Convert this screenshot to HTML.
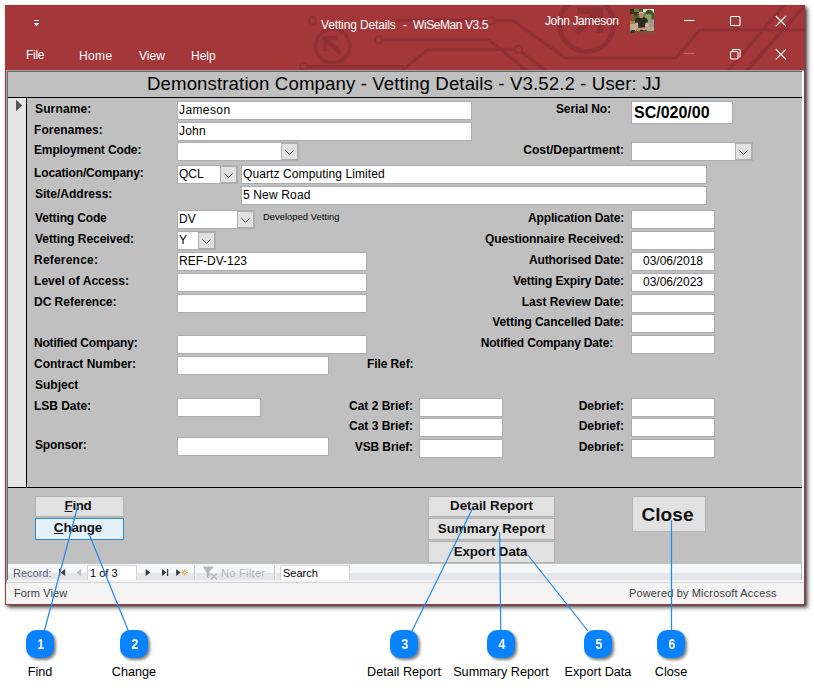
<!DOCTYPE html>
<html><head><meta charset="utf-8"><title>Vetting Details</title>
<style>
*{box-sizing:border-box;margin:0;padding:0}
html,body{width:814px;height:695px;overflow:hidden;background:#fff}
body{position:relative;font-family:"Liberation Sans",sans-serif;}
.abs{position:absolute}
#win{position:absolute;left:5px;top:5px;width:800px;height:600px;background:#a4373a;box-shadow:3px 3px 4px rgba(0,0,0,.55),1px 1px 2px rgba(0,0,0,.5)}
.seg{font-family:"Liberation Sans",sans-serif;color:#fff;white-space:nowrap}
.lbl{position:absolute;letter-spacing:0px;font-weight:bold;font-size:12px;line-height:14px;color:#000;white-space:nowrap;height:14px}
.lbl.r{text-align:right}
.fld{position:absolute;background:#fff;border:1px solid #abadb3;font-size:12px;line-height:16px;color:#000;padding:0 0 0 1px;white-space:nowrap;overflow:hidden}
.cb{position:absolute;background:#fff;border:1px solid #adadad;font-size:12px;line-height:16px;color:#000;padding:0 0 0 1px;white-space:nowrap;overflow:hidden}
.dd{position:absolute;right:0;top:0;bottom:0;width:17px;background:#e1e1e1;border:1px solid #adadad}
.dd svg{position:absolute;left:3px;top:50%;margin-top:-2px}
.btn{position:absolute;background:#e1e1e1;border:1px solid #b2b2b2;font-weight:bold;font-size:13.33px;text-align:center;color:#111;white-space:nowrap}
.co{position:absolute;width:28px;height:28px;border-radius:10px;background:#0a82fe;color:#fff;font-weight:bold;font-size:14px;line-height:28px;text-align:center;box-shadow:2px 2px 3px rgba(0,0,0,.5)}
.co span{display:inline-block;transform:scaleX(.88);position:relative;left:.6px}
.cl{position:absolute;font-size:12.67px;line-height:16px;color:#000;white-space:nowrap;text-align:center;width:120px}
.nav{font-size:11px;color:#444;white-space:nowrap}
</style></head><body>

<div id="win">
  <!-- title bar decoration (page coords shifted by -5,-5) -->
  <svg class="abs" style="left:0;top:0" width="800" height="65" viewBox="5 5 800 65" fill="none" stroke="#903035" stroke-width="3.2" stroke-linejoin="round">
    <circle cx="312.6" cy="20.4" r="3.6" stroke-width="2"/>
    <circle cx="332.7" cy="45.8" r="17" stroke-width="3.8"/>
    <path d="M340.5 53.5 L326 39 M325 51 V38 H338" stroke-width="4.6" stroke-linejoin="miter"/>
    <circle cx="378.5" cy="39.8" r="3.6" stroke-width="2"/>
    <path d="M382.5 39.9 H489 L527 71"/>
    <circle cx="303.7" cy="66.4" r="3.6" stroke-width="2"/>
    <path d="M307.5 66.6 H404"/>
    <path d="M402 70.5 L428.3 49.3 H514.5"/>
    <circle cx="518.6" cy="49.3" r="3.6" stroke-width="2"/>
    <path d="M521.5 51.5 L546 71"/>
    <circle cx="491" cy="20.4" r="3.6" stroke-width="2"/>
    <path d="M396 20.2 H487.3 M495 20.4 H513 L565 58 H676 L699.5 30 H806"/>
    <circle cx="586.5" cy="24.5" r="27" stroke-width="5"/>
    <path d="M576 33.5 L598 11.5 M577 10.5 H600 V33" stroke-width="6.5" stroke-linejoin="miter"/>
    <path d="M728 71 L785 4 M746.5 71 L806 4" stroke-width="3.6"/>
  </svg>
  <!-- window controls -->
  <svg class="abs" style="left:0;top:0" width="800" height="65" viewBox="5 5 800 65" fill="none" stroke="#fff" stroke-width="1.1">
    <path d="M34 20 H39 V21 H34 Z M33.8 23 H39.2 L36.5 26.2 Z" fill="#fff" stroke="none"/>
    <path d="M684 20.5 H694.5"/>
    <rect x="730.5" y="16.5" width="9.5" height="9" rx="1"/>
    <path d="M775.8 16 L786 26.2 M786 16 L775.8 26.2"/>
    <path d="M684 53.5 H694.5" stroke="#c8636b"/>
    <rect x="730.5" y="51.5" width="7.5" height="7.5" rx="1.2"/>
    <path d="M732.5 51 V50.3 Q732.5 49.5 733.5 49.5 H739 Q740.2 49.5 740.2 50.7 V56 Q740.2 57 739.3 57 H738.6"/>
    <path d="M775.8 49.2 L786 59.4 M786 49.2 L775.8 59.4"/>
  </svg>
  <div class="seg abs" style="left:316px;top:12px;font-size:12px;line-height:16px"><span id="t1" style="letter-spacing:-.14px">Vetting Details</span></div>
  <div class="seg abs" style="left:398px;top:12px;font-size:12px;line-height:16px"><span id="t2">-</span></div>
  <div class="seg abs" style="left:408px;top:12px;font-size:12px;line-height:16px"><span id="t3" style="letter-spacing:-.42px">WiSeMan V3.5</span></div>
  <div class="seg abs" style="left:540px;top:8px;font-size:12px;letter-spacing:-.38px;line-height:16px">John Jameson</div>
  <svg class="abs" style="left:625px;top:4px" width="24" height="24" viewBox="0 0 24 24"><defs><filter id="avb" x="-10%" y="-10%" width="120%" height="120%"><feGaussianBlur stdDeviation="0.55"/></filter><clipPath id="avc"><rect width="24" height="24"/></clipPath></defs><g clip-path="url(#avc)"><rect width="24" height="24" fill="#4b5a2d"/><g filter="url(#avb)"><rect x="-1" y="-1" width="10" height="7" fill="#2c3619"/><rect x="4" y="0" width="5" height="3" fill="#6f8040"/><rect x="13" y="-1" width="12" height="4.5" fill="#e4e9e6"/><path d="M16 2 Q19 -0.5 22.5 2 L23 7 H15 Z" fill="#3c4f22"/><rect x="14.5" y="5" width="7" height="6" fill="#8a9c55"/><rect x="-1" y="5" width="5.5" height="8" fill="#8c4d29"/><rect x="0" y="12" width="5" height="3" fill="#9a8a3a"/><rect x="18" y="10.5" width="7" height="8" fill="#9b9a90"/><rect x="-1" y="15" width="7" height="7" fill="#b8ac9b"/><rect x="17" y="18" width="8" height="4" fill="#b5a794"/><path d="M5 11 Q6 8.5 9 8.5 H14 Q17 8.5 17.5 11.5 L18 19 H5 Z" fill="#2a2e23"/><ellipse cx="11.2" cy="6" rx="2.6" ry="3.1" fill="#b98a6c"/><path d="M8.2 4.2 Q11 0.8 14.3 4 L14.6 4.8 Q11 3.2 7.8 5 Z" fill="#cdb3a6"/><path d="M8 5 L7.2 4.4 M14.4 4.6 L15.4 5.4" stroke="#a9522c" stroke-width="1.2"/><rect x="5" y="13.5" width="3.2" height="7" rx="1.4" fill="#d3a98e"/><rect x="15.2" y="13.5" width="3.6" height="6.5" rx="1.5" fill="#d7ae95"/><path d="M6 19.2 L18.5 18 L19 20.5 L7 22 Z" fill="#c8997c"/><rect x="-1" y="22" width="26" height="3" fill="#6b5943"/><rect x="1" y="21" width="4" height="3" fill="#3a372c"/><rect x="10" y="20.8" width="3" height="1.3" fill="#2b2622"/></g></g></svg>
  <div class="seg abs" style="left:21px;top:42px;font-size:12px;letter-spacing:-.3px;line-height:16px">File</div>
  <div class="seg abs" style="left:74px;top:43px;font-size:12px;letter-spacing:.35px;line-height:16px">Home</div>
  <div class="seg abs" style="left:134px;top:43px;font-size:12px;line-height:16px">View</div>
  <div class="seg abs" style="left:186px;top:43px;font-size:12px;line-height:16px">Help</div>
</div>

<!-- client area (page coords) -->
<div class="abs" style="left:6px;top:70px;width:798px;height:534px;background:#f3f3f3"></div>
<div class="abs" style="left:6px;top:70px;width:1px;height:512px;background:#a3a8a8"></div>
<div class="abs" style="left:802px;top:71px;width:2px;height:511px;background:#fff"></div>
<div class="abs" style="left:6px;top:70px;width:798px;height:1px;background:#a0a2a2"></div>
<div class="abs" style="left:7px;top:71px;width:795px;height:509px;background:#c0c0c0;border-left:1px solid #696969;border-top:1px solid #696969"></div>
<div class="abs" id="hdr" style="left:7px;top:72px;width:794px;height:24px;font-size:18.67px;letter-spacing:.1px;line-height:24px;text-align:center;color:#000;white-space:nowrap">Demonstration Company - Vetting Details - V3.52.2 - User: JJ</div>
<div class="abs" style="left:8px;top:97px;width:794px;height:1px;background:#000"></div>
<div class="abs" style="left:8px;top:98px;width:18px;height:389px;background:#e6e6e6"></div>
<div class="abs" style="left:26px;top:98px;width:1px;height:389px;background:#000"></div>
<div class="abs" style="left:8px;top:487px;width:794px;height:1px;background:#000"></div>
<svg class="abs" style="left:15px;top:99px" width="8" height="13" viewBox="0 0 8 13"><path d="M1 0.8 L7.3 6.5 L1 12.2 Z" fill="#555"/></svg>

<div class="lbl" style="left:35px;top:102px;letter-spacing:0.14px">Surname:</div>
<div class="lbl" style="left:34px;top:123px;letter-spacing:0.08px">Forenames:</div>
<div class="lbl" style="left:34px;top:143px;letter-spacing:-0.13px">Employment Code:</div>
<div class="lbl" style="left:34px;top:166px;letter-spacing:-0.14px">Location/Company:</div>
<div class="lbl" style="left:35px;top:187px">Site/Address:</div>
<div class="lbl" style="left:35px;top:211px;letter-spacing:-0.14px">Vetting Code</div>
<div class="lbl" style="left:35px;top:232px;letter-spacing:-0.06px">Vetting Received:</div>
<div class="lbl" style="left:34px;top:253px;letter-spacing:0.21px">Reference:</div>
<div class="lbl" style="left:34px;top:274px;letter-spacing:0.05px">Level of Access:</div>
<div class="lbl" style="left:34px;top:295px;letter-spacing:-0.02px">DC Reference:</div>
<div class="lbl" style="left:34px;top:336px;letter-spacing:-0.19px">Notified Company:</div>
<div class="lbl" style="left:34px;top:357px">Contract Number:</div>
<div class="lbl" style="left:35px;top:378px">Subject</div>
<div class="lbl" style="left:34px;top:399px;letter-spacing:-0.03px">LSB Date:</div>
<div class="lbl" style="left:35px;top:438px;letter-spacing:-0.14px">Sponsor:</div>
<div class="lbl" style="left:367px;top:357px;letter-spacing:-0.1px">File Ref:</div>
<div class="lbl r" style="left:351px;top:102px;width:260px;letter-spacing:-0.1px">Serial No:</div>
<div class="lbl r" style="left:364px;top:143px;width:260px">Cost/Department:</div>
<div class="lbl r" style="left:364px;top:211px;width:260px;letter-spacing:-0.16px">Application Date:</div>
<div class="lbl r" style="left:364px;top:232px;width:260px;letter-spacing:-0.07px">Questionnaire Received:</div>
<div class="lbl r" style="left:364px;top:253px;width:260px;letter-spacing:-0.1px">Authorised Date:</div>
<div class="lbl r" style="left:364px;top:274px;width:260px;letter-spacing:-0.12px">Vetting Expiry Date:</div>
<div class="lbl r" style="left:364px;top:295px;width:260px;letter-spacing:-0.03px">Last Review Date:</div>
<div class="lbl r" style="left:364px;top:315px;width:260px;letter-spacing:-0.07px">Vetting Cancelled Date:</div>
<div class="lbl r" style="left:353px;top:336px;width:260px;letter-spacing:-0.17px">Notified Company Date:</div>
<div class="lbl r" style="left:364px;top:399px;width:260px">Debrief:</div>
<div class="lbl r" style="left:364px;top:419px;width:260px">Debrief:</div>
<div class="lbl r" style="left:364px;top:440px;width:260px">Debrief:</div>
<div class="lbl r" style="left:153px;top:399px;width:260px">Cat 2 Brief:</div>
<div class="lbl r" style="left:153px;top:419px;width:260px">Cat 3 Brief:</div>
<div class="lbl r" style="left:153px;top:440px;width:260px;letter-spacing:-0.12px">VSB Brief:</div>
<div class="fld" style="left:177px;top:101px;width:295px;height:19px;letter-spacing:.4px">Jameson</div>
<div class="fld" style="left:177px;top:122px;width:295px;height:19px;letter-spacing:.2px">John</div>
<div class="cb" style="left:177px;top:142px;width:122px;height:19px"><div class="dd"><svg width="9" height="6" viewBox="0 0 9 6"><path d="M0.5 0.5 L4.5 4.5 L8.5 0.5" fill="none" stroke="#444" stroke-width="1"/></svg></div></div>
<div class="cb" style="left:177px;top:165px;width:61px;height:19px">QCL<div class="dd"><svg width="9" height="6" viewBox="0 0 9 6"><path d="M0.5 0.5 L4.5 4.5 L8.5 0.5" fill="none" stroke="#444" stroke-width="1"/></svg></div></div>
<div class="fld" style="left:241px;top:165px;width:466px;height:19px;letter-spacing:.1px">Quartz Computing Limited</div>
<div class="fld" style="left:241px;top:186px;width:466px;height:19px;letter-spacing:.15px">5 New Road</div>
<div class="cb" style="left:177px;top:210px;width:78px;height:19px">DV<div class="dd"><svg width="9" height="6" viewBox="0 0 9 6"><path d="M0.5 0.5 L4.5 4.5 L8.5 0.5" fill="none" stroke="#444" stroke-width="1"/></svg></div></div>
<div class="abs" style="left:263px;top:212px;font-size:9.33px;letter-spacing:.05px;line-height:11px;color:#000;white-space:nowrap">Developed Vetting</div>
<div class="cb" style="left:177px;top:231px;width:39px;height:19px">Y<div class="dd"><svg width="9" height="6" viewBox="0 0 9 6"><path d="M0.5 0.5 L4.5 4.5 L8.5 0.5" fill="none" stroke="#444" stroke-width="1"/></svg></div></div>
<div class="fld" style="left:177px;top:252px;width:190px;height:19px;">REF-DV-123</div>
<div class="fld" style="left:177px;top:273px;width:190px;height:19px;"></div>
<div class="fld" style="left:177px;top:294px;width:190px;height:19px;"></div>
<div class="fld" style="left:177px;top:335px;width:190px;height:19px;"></div>
<div class="fld" style="left:177px;top:356px;width:152px;height:19px;"></div>
<div class="fld" style="left:177px;top:398px;width:84px;height:19px;"></div>
<div class="fld" style="left:177px;top:437px;width:152px;height:19px;"></div>
<div class="fld" style="left:631px;top:101px;width:102px;height:23px;font-weight:bold;font-size:16px;line-height:21px;padding-left:2px">SC/020/00</div>
<div class="cb" style="left:631px;top:142px;width:122px;height:19px"><div class="dd"><svg width="9" height="6" viewBox="0 0 9 6"><path d="M0.5 0.5 L4.5 4.5 L8.5 0.5" fill="none" stroke="#444" stroke-width="1"/></svg></div></div>
<div class="fld" style="left:631px;top:210px;width:84px;height:19px;"></div>
<div class="fld" style="left:631px;top:231px;width:84px;height:19px;"></div>
<div class="fld" style="left:631px;top:252px;width:84px;height:19px;text-align:center;padding:0">03/06/2018</div>
<div class="fld" style="left:631px;top:273px;width:84px;height:19px;text-align:center;padding:0">03/06/2023</div>
<div class="fld" style="left:631px;top:294px;width:84px;height:19px;"></div>
<div class="fld" style="left:631px;top:314px;width:84px;height:19px;"></div>
<div class="fld" style="left:631px;top:335px;width:84px;height:19px;"></div>
<div class="fld" style="left:631px;top:398px;width:84px;height:19px;"></div>
<div class="fld" style="left:419px;top:398px;width:84px;height:19px;"></div>
<div class="fld" style="left:631px;top:418px;width:84px;height:19px;"></div>
<div class="fld" style="left:419px;top:418px;width:84px;height:19px;"></div>
<div class="fld" style="left:631px;top:439px;width:84px;height:19px;"></div>
<div class="fld" style="left:419px;top:439px;width:84px;height:19px;"></div>

<!-- footer buttons -->
<div class="btn" style="left:35px;top:496px;width:89px;height:21px;line-height:17px;letter-spacing:-.3px;padding-right:3px"><u>F</u>ind</div>
<div class="btn" style="left:35px;top:518px;width:89px;height:22px;line-height:18px;background:#e5f1fb;border-color:#2a8ad4;letter-spacing:-.1px;padding-right:3px"><u>C</u>hange</div>
<div class="btn" style="left:428px;top:496px;width:127px;height:21px;line-height:17px">Detail Report</div>
<div class="btn" style="left:428px;top:518px;width:127px;height:22px;line-height:19px">Summary Report</div>
<div class="btn" style="left:428px;top:541px;width:127px;height:22px;line-height:20px;letter-spacing:-.1px;padding-right:2px">Export Data</div>
<div class="btn" style="left:632px;top:496px;width:74px;height:36px;line-height:35px;font-size:19px;letter-spacing:.1px;padding-right:3px">Close</div>

<!-- record navigation bar -->
<div class="abs" style="left:8px;top:564px;width:794px;height:16px;background:linear-gradient(#f6f7f8 0,#f6f7f8 9px,#e4e6ea 9px,#e4e6ea 16px);border-right:1px solid #b8b8b8"></div>
<div class="abs" style="left:6px;top:582px;width:798px;height:1px;background:#d4d4d4"></div>
<div class="abs nav" style="left:13px;top:567px;line-height:13px;color:#5c5d78">Record:</div>
<svg class="abs" style="left:58px;top:569px" width="8" height="7" viewBox="0 0 8 7"><path d="M1 0 H2.2 V7 H1 Z M7.2 0 L2.6 3.5 L7.2 7 Z" fill="#3c3c3c"/></svg>
<svg class="abs" style="left:76px;top:569px" width="6" height="7" viewBox="0 0 6 7"><path d="M5.2 0 L0.6 3.5 L5.2 7 Z" fill="#b8b8b8"/></svg>
<div class="abs" style="left:87px;top:565px;width:50px;height:15px;background:#fff;border:1px solid #d5d5d5;border-bottom:none;font-size:11px;line-height:15px;padding-left:2px;color:#000;white-space:nowrap">1 of 3</div>
<svg class="abs" style="left:145px;top:569px" width="6" height="7" viewBox="0 0 6 7"><path d="M0.7 0 L5.3 3.5 L0.7 7 Z" fill="#3c3c3c"/></svg>
<svg class="abs" style="left:161px;top:569px" width="8" height="7" viewBox="0 0 8 7"><path d="M1 0 L5.5 3.5 L1 7 Z M6 0 H7.2 V7 H6 Z" fill="#3c3c3c"/></svg>
<svg class="abs" style="left:175px;top:569px" width="14" height="8" viewBox="0 0 14 8"><path d="M1.2 0 L5.6 3.5 L1.2 7 Z" fill="#3c3c3c"/><g stroke="#e9a83f" stroke-width=".9" fill="none"><path d="M9.6 0.3 V6.9 M6.3 3.6 H12.9 M7.3 1.3 L11.9 5.9 M11.9 1.3 L7.3 5.9"/></g><circle cx="9.6" cy="3.6" r="1.2" fill="#f2f0ea" stroke="#e9a83f" stroke-width=".7"/></svg>
<div class="abs" style="left:194px;top:565px;width:1px;height:15px;background:#c2c4c8"></div>
<div class="abs" style="left:195px;top:565px;width:1px;height:15px;background:#fbfbfb"></div>
<svg class="abs" style="left:203px;top:566px" width="16" height="14" viewBox="0 0 16 14"><path d="M0 0.5 H11 L6.6 5.6 V10.4 H5.6 M4.5 10 V5.6 Z" fill="#b6b6ba"/><path d="M4.5 5.6 V11.5 H6" fill="none" stroke="#b6b6ba" stroke-width="1"/><path d="M7.5 7.5 L14 13.5 M14 7.5 L7.5 13.5" stroke="#b6b6ba" stroke-width="1.3"/></svg>
<div class="abs nav" style="left:221px;top:567px;line-height:13px;letter-spacing:.3px;color:#b3b3bf">No Filter</div>
<div class="abs" style="left:274px;top:565px;width:1px;height:15px;background:#c2c4c8"></div>
<div class="abs" style="left:275px;top:565px;width:1px;height:15px;background:#fbfbfb"></div>
<div class="abs" style="left:280px;top:565px;width:70px;height:15px;background:#fff;border:1px solid #d5d5d5;border-bottom:none;font-size:11px;line-height:15px;padding-left:2px;color:#000;white-space:nowrap">Search</div>

<!-- status bar -->
<div class="abs" style="left:14px;top:586px;font-size:11px;letter-spacing:.1px;line-height:14px;color:#3c3c3c;white-space:nowrap">Form View</div>
<div class="abs" style="left:629px;top:586px;font-size:11px;letter-spacing:.15px;line-height:14px;color:#3c3c3c;white-space:nowrap">Powered by Microsoft Access</div>

<!-- callouts -->
<svg class="abs" style="left:0;top:0" width="814" height="695" viewBox="0 0 814 695" fill="none" stroke="#1e88f0" stroke-width="1.2">
<path d="M77.8 506 L44.3 631"/>
<path d="M88.9 533.4 L128.4 631"/>
<path d="M472.4 508.7 L412 631"/>
<path d="M499.6 532 L500.8 631"/>
<path d="M527.8 555 L588 631"/>
<path d="M671.5 520.5 L671.5 631"/>
</svg>
<div class="co" style="left:26px;top:630px"><span>1</span></div>
<div class="co" style="left:120px;top:630px"><span>2</span></div>
<div class="co" style="left:390px;top:630px"><span>3</span></div>
<div class="co" style="left:487px;top:630px"><span>4</span></div>
<div class="co" style="left:584px;top:630px"><span>5</span></div>
<div class="co" style="left:657px;top:630px"><span>6</span></div>
<div class="cl" style="left:-20px;top:664px">Find</div>
<div class="cl" style="left:74px;top:664px">Change</div>
<div class="cl" style="left:344px;top:664px">Detail Report</div>
<div class="cl" style="left:441px;top:664px">Summary Report</div>
<div class="cl" style="left:538px;top:664px">Export Data</div>
<div class="cl" style="left:611px;top:664px">Close</div>


</body></html>
